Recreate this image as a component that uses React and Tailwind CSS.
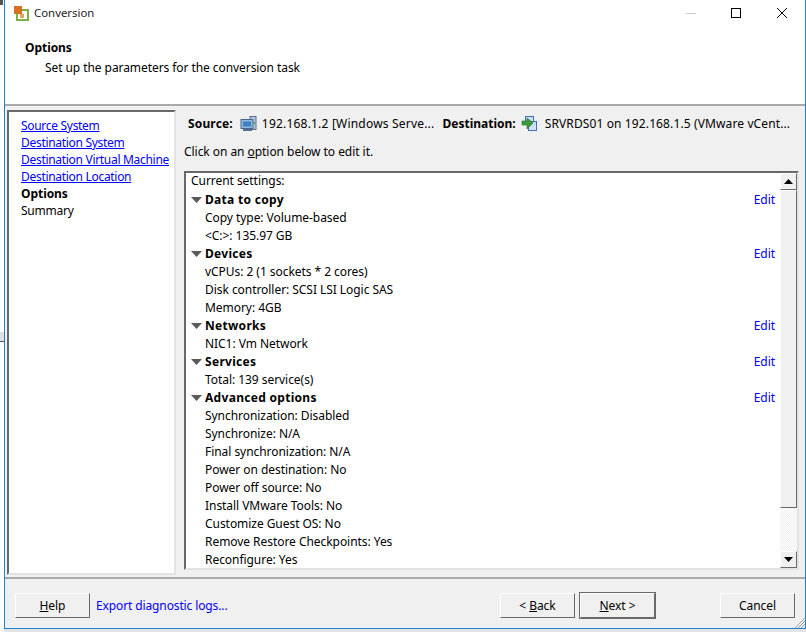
const LINKS = ['Source System', 'Destination System', 'Destination Virtual Machine', 'Destination Location'];

const SECTIONS = [
  { title: 'Data to copy', rows: ['Copy type: Volume-based', '<C:>: 135.97 GB'] },
  { title: 'Devices', rows: ['vCPUs: 2 (1 sockets * 2 cores)', 'Disk controller: SCSI LSI Logic SAS', 'Memory: 4GB'] },
  { title: 'Networks', rows: ['NIC1: Vm Network'] },
  { title: 'Services', rows: ['Total: 139 service(s)'] },
  {
    title: 'Advanced options',
    rows: [
      'Synchronization: Disabled',
      'Synchronize: N/A',
      'Final synchronization: N/A',
      'Power on destination: No',
      'Power off source: No',
      'Install VMware Tools: No',
      'Customize Guest OS: No',
      'Remove Restore Checkpoints: Yes',
      'Reconfigure: Yes',
    ],
  },
];

function AppIcon() {
  return (
    <svg width="15" height="15" viewBox="0 0 15 15" className="shrink-0">
      <rect x="3" y="4" width="11" height="10" fill="#fff" stroke="#7fae45" strokeWidth="2" />
      <rect x="0" y="0" width="8" height="8" fill="#d9711f" />
      <rect x="6" y="8" width="4" height="4" fill="#e8a25c" />
    </svg>
  );
}

function ServerIcon() {
  return (
    <svg width="17" height="16" viewBox="0 0 17 16" className="shrink-0">
      <rect x="10" y="0.5" width="6" height="13" fill="#b9c8da" stroke="#54708f" />
      <rect x="1" y="3.5" width="12" height="9" fill="#8fb8e0" stroke="#4a6585" />
      <rect x="3" y="5.5" width="8" height="5" fill="#3d7fc0" />
      <rect x="3" y="13" width="9" height="2" fill="#54708f" />
      <rect x="14" y="6" width="1" height="2" fill="#2f9e3a" />
    </svg>
  );
}

function VmIcon() {
  return (
    <svg width="16" height="16" viewBox="0 0 16 16" className="shrink-0">
      <rect x="4.5" y="0.5" width="8" height="8" fill="#cfe0f5" stroke="#3f6fb5" />
      <rect x="7.5" y="5.5" width="8" height="9" fill="#cfe0f5" stroke="#3f6fb5" />
      <path d="M1 5h5V2l6 5-6 6v-4H1z" fill="#3c9a3c" stroke="#1f6b28" strokeWidth="0.6" />
    </svg>
  );
}

function Caret({ down }) {
  return (
    <svg width="9" height="5" viewBox="0 0 9 5" className="block">
      <path d={down ? 'M0 0h9L4.5 5z' : 'M0 5h9L4.5 0z'} fill="#000" />
    </svg>
  );
}

function ScrollButton({ down }) {
  return (
    <div className="flex h-[17px] items-center justify-center border border-t-white border-l-white border-r-[#696969] border-b-[#696969] bg-[#f0f0f0]">
      <Caret down={down} />
    </div>
  );
}

function WinButton({ children, className = 'w-[75px]' }) {
  return (
    <button className={`flex h-[25px] items-center justify-center border border-t-white border-l-white border-r-[#696969] border-b-[#696969] bg-[#f0f0f0] ${className}`}>
      {children}
    </button>
  );
}

export default function App() {
  return (
    <div className="flex h-[632px] w-[806px] bg-[#e4e4e4] font-['Noto_Sans',sans-serif] text-[12px] leading-[18px] tracking-[-0.05px] text-black">
      <div className="flex w-1 shrink-0 flex-col bg-white">
        <div className="h-[5px] w-[3px] bg-[#555]" />
        <div className="mt-[327px] h-[9px] bg-[#e0e0e0]" />
        <div className="h-px bg-[#555]" />
      </div>
      <div className="flex h-[629px] min-w-0 flex-1 flex-col border-x border-b border-[#1883d7] bg-[#f0f0f0]">
        <div className="flex h-[26px] items-center bg-white pl-[9px]">
          <AppIcon />
          <span className="ml-[5px] text-[11.4px] tracking-normal text-[#222]">Conversion</span>
          <div className="ml-auto flex h-full items-center">
            <div className="mr-[35px] h-px w-[10px] bg-[#ccc]" />
            <div className="mr-[36px] h-[10px] w-[10px] border border-black" />
            <svg width="10" height="10" viewBox="0 0 10 10" className="mr-[18px]">
              <path d="M0 0l10 10M10 0L0 10" stroke="#000" strokeWidth="1" fill="none" />
            </svg>
          </div>
        </div>

        <div className="h-[80px] border-b-2 border-[#a9a9a9] bg-white pl-5 pt-[13px]">
          <div className="font-bold">Options</div>
          <div className="mt-[2px] pl-5 tracking-[-0.07px]">Set up the parameters for the conversion task</div>
        </div>

        <div className="flex min-h-0 flex-1 pl-[2px] pt-[4px]">
          <div className="mb-[2px] w-[169px] shrink-0 whitespace-nowrap border-2 border-t-[#696969] border-l-[#696969] border-r-[#e3e3e3] border-b-[#e3e3e3] bg-white pl-[12px] pt-[5px] leading-[17px]">
            {LINKS.map((l) => (
              <div key={l} className="tracking-[-0.3px] text-[#0000ff] underline">{l}</div>
            ))}
            <div className="font-bold">Options</div>
            <div className="tracking-[-0.25px]">Summary</div>
          </div>

          <div className="flex min-w-0 flex-1 flex-col pb-[7px] pl-[8px] pr-[6px] pt-[4px]">
            <div className="flex h-[20px] items-center whitespace-nowrap pl-[4px] tracking-normal">
              <span className="font-bold tracking-[0.15px]">Source:</span>
              <span className="ml-[7px]"><ServerIcon /></span>
              <span className="ml-[5px] tracking-[0.2px]">192.168.1.2 [Windows Serve...</span>
              <span className="ml-[8px] font-bold">Destination:</span>
              <span className="ml-[5px]"><VmIcon /></span>
              <span className="ml-[8px] tracking-[0.12px]">SRVRDS01 on 192.168.1.5 (VMware vCent...</span>
            </div>
            <div className="mt-[9px] h-[18px]">
              Click on an <span className="underline">o</span>ption below to edit it.
            </div>
            <div className="mt-[10px] flex min-h-0 flex-1 border-2 border-t-[#696969] border-l-[#696969] border-r-[#e3e3e3] border-b-[#e3e3e3] bg-white">
              <div className="min-w-0 flex-1 overflow-hidden pl-[5px]">
                <div className="-mt-px mb-px">Current settings:</div>
                {SECTIONS.map((s) => (
                  <div key={s.title}>
                    <div className="flex items-center pr-[5px]">
                      <svg width="11" height="6" viewBox="0 0 11 6" className="mr-[3px]">
                        <path d="M0 0h11L5.5 6z" fill="#5a5a5a" />
                      </svg>
                      <span className="font-bold tracking-[0.3px]">{s.title}</span>
                      <span className="ml-auto text-[#0000ff]">Edit</span>
                    </div>
                    {s.rows.map((r) => (
                      <div key={r} className="pl-[14px]">{r}</div>
                    ))}
                  </div>
                ))}
              </div>
              <div className="flex w-[17px] shrink-0 flex-col">
                <ScrollButton />
                <div className="h-[318px] border border-t-white border-l-white border-r-[#696969] border-b-[#696969] bg-[#f0f0f0]" />
                <div className="flex-1 bg-[repeating-conic-gradient(#f0f0f0_0_25%,#fff_0_50%)] bg-[length:2px_2px]" />
                <ScrollButton down />
              </div>
            </div>
          </div>
        </div>

        <div className="relative flex h-[51px] items-center border-t-2 border-[#a9a9a9] px-[10px] pt-[4px]">
          <WinButton>
            <span><span className="underline">H</span>elp</span>
          </WinButton>
          <span className="ml-[6px] tracking-[-0.12px] text-[#0000ff]">Export diagnostic logs...</span>
          <div className="ml-auto">
            <WinButton>
              <span>&lt; <span className="underline">B</span>ack</span>
            </WinButton>
          </div>
          <div className="ml-[4px] border border-[#696969]">
            <WinButton className="w-[75px]">
              <span><span className="underline">N</span>ext &gt;</span>
            </WinButton>
          </div>
          <div className="ml-[64px]">
            <WinButton>Cancel</WinButton>
          </div>
          <svg width="12" height="12" viewBox="0 0 12 12" className="absolute bottom-0 right-0">
            <path d="M12 2L2 12M12 5L5 12M12 8L8 12" stroke="#a0a0a0" strokeWidth="1" fill="none" />
          </svg>
        </div>
      </div>
    </div>
  );
}
